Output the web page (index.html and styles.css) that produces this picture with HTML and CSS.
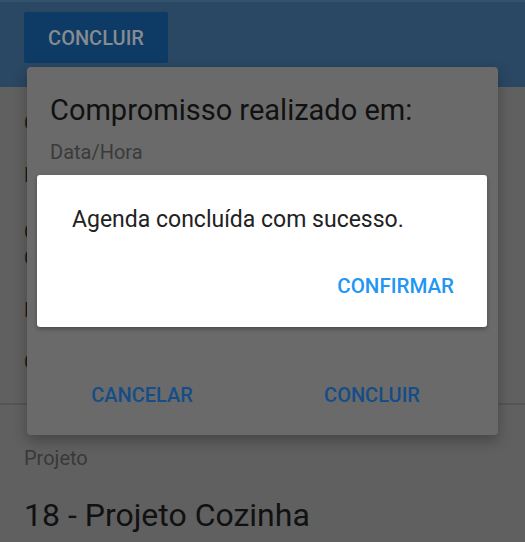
FILE: index.html
```html
<!DOCTYPE html>
<html lang="pt-BR">
<head>
<meta charset="utf-8">
<title>Concluir agenda</title>
<link rel="stylesheet" href="styles.css">
</head>
<body>
<div class="page">
  <header class="topbar">
    <button class="top-btn">CONCLUIR</button>
  </header>
  <main class="content">
    <div class="field f1">Cliente</div>
    <div class="field f2">Data</div>
    <div class="field f3">Contato<br>Comercial</div>
    <div class="field f4">Descrição</div>
    <div class="field f5">Compromisso</div>
    <div class="divider"></div>
    <div class="label">Projeto</div>
    <div class="value">18 - Projeto Cozinha</div>
  </main>
</div>

<div class="dialog">
  <h2 class="dialog-title">Compromisso realizado em:</h2>
  <div class="dialog-sub">Data/Hora</div>
  <div class="dialog-actions">
    <button class="act">CANCELAR</button>
    <button class="act">CONCLUIR</button>
  </div>
</div>

<div class="alert">
  <p class="alert-msg">Agenda concluída com sucesso.</p>
  <div class="alert-actions">
    <button class="confirm">CONFIRMAR</button>
  </div>
</div>
</body>
</html>
```
FILE: styles.css
```css
* { box-sizing: border-box; }
html, body {
  margin: 0;
  padding: 0;
  width: 525px;
  height: 542px;
  overflow: hidden;
  background: #606060;
  font-family: Roboto, "Noto Sans", sans-serif;
}
button {
  font-family: inherit;
  border: 0;
  background: none;
  padding: 0;
  cursor: pointer;
}
.page {
  display: flex;
  flex-direction: column;
}
.topbar {
  height: 87px;
  background: #2a4763;
  border-top: 2px solid #34516c;
  padding: 10px 0 0 24px;
}
.top-btn {
  width: 144px;
  height: 51px;
  background: #0e3b65;
  color: #868c90;
  font-size: 20px;
  font-weight: 500;
  border-radius: 2px;
}
.content {
  display: flex;
  flex-direction: column;
  padding-left: 24px;
  color: #1a1a1a;
}
.field {
  font-size: 20px;
  line-height: 24px;
}
.f1 { margin-top: 24px; }
.f2 { margin-top: 28px; }
.f3 { margin-top: 32px; line-height: 26px; }
.f4 { margin-top: 27px; }
.f5 { margin-top: 28px; }
.divider {
  height: 2px;
  background: #555;
  margin: 29px 0 0 -24px;
}
.label {
  margin-top: 41px;
  font-size: 20px;
  line-height: 24px;
  color: #393939;
}
.value {
  margin-top: 26px;
  font-size: 32px;
  line-height: 38px;
  color: #111;
}

.dialog {
  position: absolute;
  left: 27px;
  top: 67px;
  width: 471px;
  height: 368px;
  background: #6a6a6a;
  border-radius: 4px;
  box-shadow: 0 6px 14px rgba(0, 0, 0, 0.28);
  padding: 26px 0 28px 23px;
  display: flex;
  flex-direction: column;
}
.dialog-title {
  margin: 0;
  font-size: 29px;
  line-height: 34px;
  font-weight: 400;
  color: #111;
}
.dialog-sub {
  margin-top: 13px;
  font-size: 20px;
  line-height: 24px;
  color: #3a3a3a;
}
.dialog-actions {
  margin-top: auto;
  margin-left: -23px;
  display: grid;
  grid-template-columns: 230px 230px;
}
.act {
  font-size: 20px;
  line-height: 24px;
  font-weight: 500;
  color: #144d87;
  text-align: center;
}

.alert {
  position: absolute;
  left: 37px;
  top: 175px;
  width: 450px;
  height: 152px;
  background: #fff;
  border-radius: 3px;
  box-shadow: 0 2px 4px rgba(0, 0, 0, 0.3);
  padding: 31px 33px 29px 35px;
  display: flex;
  flex-direction: column;
}
.alert-msg {
  margin: 0;
  font-size: 23px;
  line-height: 28px;
  color: #222;
}
.alert-actions {
  margin-top: auto;
  display: flex;
  justify-content: flex-end;
}
.confirm {
  font-size: 20.5px;
  line-height: 24px;
  font-weight: 500;
  color: #2196f3;
}
```
